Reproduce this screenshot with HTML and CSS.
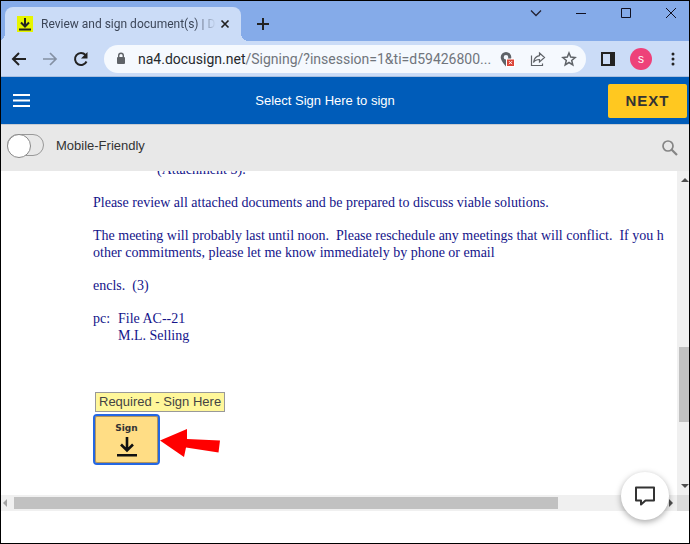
FILE: index.html
```
<!DOCTYPE html>
<html lang="en">
  <head>
    <meta charset="UTF-8" />
    <meta name="viewport" content="width=device-width, initial-scale=1.0" />
    <title>Review and sign document(s)</title>
    <link rel="stylesheet" href="styles.css">
  </head>
  <body>
    <div class="tabs">
      <div class="tab">
        <svg class="favicon" width="16" height="16" viewBox="0 0 16 16">
          <path fill="#e6f500" d="M0 0h16v16H0z" />
          <path fill="none" stroke="#222" stroke-width="2" d="M8 2v8M4 6.500l4 4 4-4M2 13.500h12" />
        </svg>
        <span class="tab-title">Review and sign document(s) | Do</span>
        <button class="tab-close" aria-label="close tab">
          <svg width="10" height="10" viewBox="0 0 10 10">
            <path fill="none" stroke="#222" stroke-width="1.700" d="M1.500 1.500l7 7M8.500 1.500l-7 7" />
          </svg>
        </button>
      </div>
      <button class="new-tab" aria-label="new tab">
        <svg width="12" height="12" viewBox="0 0 12 12">
          <path stroke="#222" stroke-width="2" d="M6 0v12M0 6h12" />
        </svg>
      </button>
      <div class="window-buttons">
        <button aria-label="search tabs">
          <svg width="12" height="12" viewBox="0 0 12 12">
            <path fill="none" stroke="#223" stroke-width="1.300" d="M1 3.500l5 5 5-5" />
          </svg>
        </button>
        <button aria-label="minimize">
          <svg width="12" height="12" viewBox="0 0 12 12">
            <path stroke="#112" d="M1 6.500h10" />
          </svg>
        </button>
        <button aria-label="maximize">
          <svg width="12" height="12" viewBox="0 0 12 12">
            <path fill="none" stroke="#112" d="M1.500 1.500h9v9h-9z" />
          </svg>
        </button>
        <button aria-label="close">
          <svg width="12" height="12" viewBox="0 0 12 12">
            <path stroke="#112" d="M1 1l10 10M11 1L1 11" />
          </svg>
        </button>
      </div>
    </div>

    <div class="toolbar">
      <button aria-label="back">
        <svg width="16" height="16" viewBox="0 0 16 16">
          <path fill="none" stroke="#222" stroke-width="2" d="M15 8H2M8 2L2 8l6 6" />
        </svg>
      </button>
      <button aria-label="forward">
        <svg width="16" height="16" viewBox="0 0 16 16">
          <path fill="none" stroke="#8490a3" stroke-width="1.700" d="M1 8h13M8 2l6 6-6 6" />
        </svg>
      </button>
      <button aria-label="reload">
        <svg width="16" height="16" viewBox="0 0 16 16">
          <path fill="none" stroke="#222" stroke-width="2" d="M13.500 10.500a6 6 0 1 1-1-6.500" />
          <path fill="#222" d="M14.500 1v6.500H8z" />
        </svg>
      </button>
      <div class="address">
        <svg width="10" height="13" viewBox="0 0 10 13">
          <rect x="1" y="5" width="8" height="7" rx="1" fill="#5f6368" />
          <path fill="none" stroke="#5f6368" stroke-width="1.400" d="M2.700 6V3.500a2.300 2.300 0 0 1 4.600 0V6" />
        </svg>
        <span class="url"><b>na4.docusign.net</b>/Signing/?insession=1&amp;ti=d59426800...</span>
        <button aria-label="location blocked">
          <svg width="16" height="16" viewBox="0 0 16 16">
            <path fill="#5f6368" fill-rule="evenodd" d="M7 1a5.300 5.300 0 0 0-5.300 5.300C1.700 10 7 15.500 7 15.500s5.300-5.500 5.300-9.200A5.300 5.300 0 0 0 7 1zm0 3a2.300 2.300 0 1 1 0 4.600A2.300 2.300 0 0 1 7 4z" />
            <path fill="#fff" d="M7 7.500h9V16H7z" />
            <path fill="#db4437" d="M8 8.500h7V15H8z" />
            <path stroke="#fff" d="M10 10.200l3 3M13 10.200l-3 3" />
          </svg>
        </button>
        <button aria-label="share">
          <svg width="16" height="16" viewBox="0 0 16 16">
            <path fill="none" stroke="#5f6368" stroke-width="1.200" d="M1.500 4.500v10h11v-2M9.500 2l5 4.500-5 4.500V8.500c-2.500 0-4.500.6-6 3 .5-3.500 2.500-6.300 6-6.800z" />
          </svg>
        </button>
        <button aria-label="bookmark">
          <svg width="16" height="16" viewBox="0 0 16 16">
            <path fill="none" stroke="#5f6368" stroke-width="1.500" d="M8 2l1.700 4.100 4.400.4-3.400 2.900 1.100 4.400L8 11.500l-3.800 2.300 1.100-4.400-3.400-2.900 4.400-.4z" />
          </svg>
        </button>
      </div>
      <button aria-label="side panel">
        <svg width="14" height="14" viewBox="0 0 14 14">
          <path fill="none" stroke="#222" stroke-width="2" d="M1 1h12v12H1z" />
          <path fill="#222" d="M9 1h4v12H9z" />
        </svg>
      </button>
      <button class="profile" aria-label="profile">s</button>
      <button aria-label="menu">
        <svg width="4" height="14" viewBox="0 0 4 14">
          <circle cx="2" cy="2" r="1.500" fill="#222" />
          <circle cx="2" cy="7" r="1.500" fill="#222" />
          <circle cx="2" cy="12" r="1.500" fill="#222" />
        </svg>
      </button>
    </div>

    <header class="header">
      <button class="menu" aria-label="open menu">
        <svg width="17" height="13" viewBox="0 0 17 13">
          <path stroke="#fff" stroke-width="2" d="M0 1h17M0 6.500h17M0 12h17" />
        </svg>
      </button>
      <span class="message">Select Sign Here to sign</span>
      <button class="next">NEXT</button>
    </header>

    <div class="options">
      <label class="mobile">
        <input type="checkbox" class="switch" />
        Mobile-Friendly
      </label>
      <button aria-label="search">
        <svg width="16" height="16" viewBox="0 0 16 16">
          <circle cx="6" cy="6" r="5" fill="none" stroke="#858585" stroke-width="1.700" />
          <path stroke="#858585" stroke-width="2.200" d="M9.500 9.500l5.500 5.500" />
        </svg>
      </button>
    </div>

    <div class="viewer">
      <main class="document">
        <p class="attachment">(Attachment 3).</p>
        <p>Please review all attached documents and be prepared to discuss viable solutions.</p>
        <p>The meeting will probably last until noon.  Please reschedule any meetings that will conflict.  If you h
other commitments, please let me know immediately by phone or email</p>
        <p>encls.  (3)</p>
        <p class="copies"><span>pc:</span><span>File AC--21</span><span>M.L. Selling</span></p>
        <div class="signature">
          <span class="tooltip">Required - Sign Here</span>
          <div class="sign-row">
            <button class="sign">
              Sign
              <svg width="20" height="20" viewBox="0 0 20 20">
                <path fill="none" stroke="#111" stroke-width="2.600" d="M10 0v13M4 7.500l6 6 6-6M0 18.300h20" />
              </svg>
            </button>
            <svg class="arrow" width="60" height="28" viewBox="0 0 60 28">
              <path fill="#f00" d="M0 11.500L27 0v10l33 1.500-1.500 12L26 18.500 24 28z" />
            </svg>
          </div>
        </div>
      </main>
      <div class="scroll-y">
        <svg width="8" height="4" viewBox="0 0 8 4"><path fill="#505050" d="M0 4l4-4 4 4z" /></svg>
        <div class="track"><div class="thumb"></div></div>
        <svg width="8" height="4" viewBox="0 0 8 4"><path fill="#505050" d="M0 0l4 4 4-4z" /></svg>
      </div>
      <div class="scroll-x">
        <svg width="4" height="8" viewBox="0 0 4 8"><path fill="#a3a3a3" d="M4 0L0 4l4 4z" /></svg>
        <div class="track"><div class="thumb"></div></div>
        <svg width="4" height="8" viewBox="0 0 4 8"><path fill="#505050" d="M0 0l4 4-4 4z" /></svg>
      </div>
      <div class="corner"></div>
    </div>

    <button class="chat" aria-label="comments">
      <svg width="20" height="20" viewBox="0 0 20 20">
        <path fill="none" stroke="#333" stroke-width="2" stroke-linejoin="round" d="M1 1.500h18v13h-8.500L6 18.500v-4H1z" />
      </svg>
    </button>
  </body>
</html>
```
FILE: styles.css
```
* {
  box-sizing: border-box;
}

body {
  margin: 0;
  min-height: 100vh;
  display: flex;
  flex-direction: column;
  border: 1px solid #000;
  padding-bottom: 32px;
  background: #fff;
  font-family: 'Liberation Sans', Arial, sans-serif;
  font-size: 13px;
  color: #333;
}

button {
  border: 0;
  padding: 0;
  background: none;
  font-family: inherit;
  cursor: pointer;
}

svg {
  display: block;
  flex: none;
}

/* browser */
.tabs {
  display: flex;
  align-items: flex-end;
  height: 40px;
  padding-left: 4px;
  background: #85abe9;
}

.tab {
  position: relative;
  display: flex;
  align-items: center;
  width: 236px;
  height: 34px;
  padding: 0 11px 0 12px;
  border-radius: 8px 8px 0 0;
  background: #cbdcf7;
}

.tab::before,
.tab::after {
  content: '';
  position: absolute;
  bottom: 0;
  width: 8px;
  height: 8px;
}

.tab::before {
  left: -8px;
  background: radial-gradient(circle at 0 0, transparent 8px, #cbdcf7 8px);
}

.tab::after {
  right: -8px;
  background: radial-gradient(circle at 100% 0, transparent 8px, #cbdcf7 8px);
}

.tab-title {
  flex: 1;
  margin: 0 4px 0 8px;
  overflow: hidden;
  white-space: nowrap;
  font-family: Roboto, sans-serif;
  font-size: 12px;
  color: #3c4658;
  mask-image: linear-gradient(to left, transparent, #000 20px);
}

.new-tab {
  align-self: center;
  margin: 6px 0 0 16px;
}

.window-buttons {
  display: flex;
  align-self: flex-start;
  gap: 33px;
  margin: 6px 12px 0 auto;
}

.toolbar {
  display: flex;
  align-items: center;
  gap: 15px;
  height: 36px;
  padding: 0 14px 0 10px;
  border-bottom: 1px solid #a9bfe0;
  background: #cbdcf7;
}

.address {
  flex: 1;
  min-width: 0;
  display: flex;
  align-items: center;
  gap: 15px;
  height: 28px;
  padding: 0 9px 0 12px;
  border-radius: 14px;
  background: #f5f9fe;
}

.url {
  flex: 1;
  min-width: 0;
  overflow: hidden;
  white-space: nowrap;
  margin: 0 -12px 0 -3px;
  font-family: Roboto, sans-serif;
  font-size: 14px;
  color: #70757c;
}

.url b {
  font-weight: normal;
  color: #26292d;
}

.profile {
  width: 22px;
  height: 22px;
  margin-right: 4px;
  border-radius: 50%;
  background: #ee4179;
  color: #fff;
  font-size: 12px;
}

/* signing header */
.header {
  display: flex;
  align-items: center;
  justify-content: space-between;
  height: 47px;
  padding: 0 2px 0 12px;
  background: #005cb9;
}

.menu {
  padding-right: 12px;
}

.message {
  color: #fff;
}

.next {
  width: 79px;
  height: 34px;
  border-radius: 2px;
  background: #ffc820;
  color: #333;
  font-size: 15px;
  font-weight: bold;
  letter-spacing: 1px;
}

.options {
  display: flex;
  align-items: center;
  justify-content: space-between;
  height: 47px;
  padding: 0 11px 0 6px;
  border-top: 1px solid #c8ccd2;
  background: #e8e8e8;
}

.mobile {
  display: flex;
  align-items: center;
  gap: 12px;
  padding-bottom: 6px;
}

.switch {
  appearance: none;
  width: 37px;
  height: 22px;
  margin: 0;
  border: 1px solid #999;
  border-radius: 11px;
}

.switch::before {
  content: '';
  display: block;
  width: 22px;
  height: 22px;
  margin: -1px;
  border: 1px solid #888;
  border-radius: 50%;
  background: #fff;
}

.switch:checked::before {
  margin-left: 14px;
}

/* document */
.viewer {
  flex: 1;
  display: grid;
  grid-template-columns: minmax(0, 1fr) 12px;
  grid-template-rows: 1fr 16px;
}

.document {
  overflow: hidden;
  padding-left: 92px;
  font-family: 'Liberation Serif', 'Times New Roman', serif;
  font-size: 14px;
  line-height: 17px;
  color: #14148a;
}

.document p {
  margin: 0 0 16px;
  white-space: pre;
}

.document .attachment {
  margin-top: -10px;
  padding-left: 64px;
}

.copies {
  display: grid;
  grid-template-columns: 25px auto;
}

.copies span:last-child {
  grid-column: 2;
}

.signature {
  display: flex;
  flex-direction: column;
  align-items: flex-start;
  gap: 2px;
  margin-top: 48px;
  font-family: 'Liberation Sans', Arial, sans-serif;
}

.tooltip {
  height: 20px;
  margin-left: 2px;
  padding: 0 3px;
  border: 1px solid #999;
  background: #fff79a;
  font-size: 13px;
  line-height: 18px;
  color: #444;
}

.sign-row {
  display: flex;
  align-items: center;
}

.sign {
  display: flex;
  flex-direction: column;
  align-items: center;
  justify-content: center;
  gap: 4px;
  width: 67px;
  height: 51px;
  border: 2px solid #2467e3;
  border-radius: 4px;
  background: #ffdd85;
  box-shadow: inset 0 0 0 1px #b3955a;
  font-family: 'DejaVu Sans', Verdana, sans-serif;
  font-size: 9px;
  font-weight: bold;
  color: #333;
}

.arrow {
  margin-top: 6px;
}

/* scrollbars */
.scroll-y,
.scroll-x {
  display: flex;
  align-items: center;
  background: #f0f0f0;
}

.scroll-y {
  flex-direction: column;
  align-items: flex-end;
  padding: 7px 0;
}

.scroll-x {
  padding: 0 4px 0 2px;
}

.track {
  flex: 1;
  display: flex;
}

.thumb {
  background: #c1c1c1;
}

.scroll-y .track {
  align-items: flex-end;
  padding-bottom: 62px;
}

.scroll-y .thumb {
  width: 10px;
  height: 75px;
}

.scroll-x .track {
  padding: 0 7px;
}

.scroll-x .thumb {
  width: 84%;
  height: 12px;
}

.corner {
  background: #dcdcdc;
}

.chat {
  position: fixed;
  right: 21px;
  bottom: 24px;
  display: flex;
  align-items: center;
  justify-content: center;
  width: 48px;
  height: 48px;
  border-radius: 50%;
  background: #fff;
  box-shadow: 0 2px 6px rgba(0, 0, 0, 0.35);
}
```
